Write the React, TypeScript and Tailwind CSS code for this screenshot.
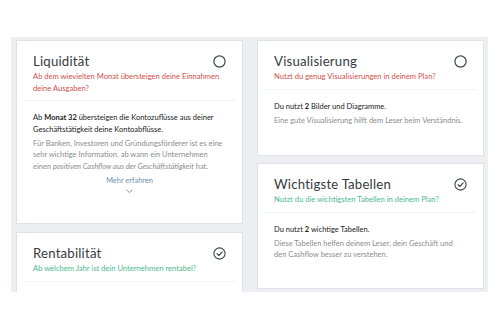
import React from 'react'

type CardProps = {
  title: string
  subtitle: string
  ok: boolean
  height: string
  children?: React.ReactNode
}

const CircleIcon = () => (
  <svg width="13" height="13" viewBox="0 0 13 13" fill="none">
    <circle cx="6.5" cy="6.5" r="5.6" stroke="#3f4449" strokeWidth="1.2" />
  </svg>
)

const CheckIcon = () => (
  <svg width="13" height="13" viewBox="0 0 13 13" fill="none">
    <circle cx="6.5" cy="6.5" r="5.6" stroke="#3f4449" strokeWidth="1.1" />
    <path d="M4 6.7l1.8 1.8L9.2 4.9" stroke="#3f4449" strokeWidth="1.1" strokeLinecap="round" strokeLinejoin="round" />
  </svg>
)

const Card = ({ title, subtitle, ok, height, children }: CardProps) => (
  <div className={`bg-white border border-[#dfe2e7] px-[16px] pt-[11px] shrink-0 ${height}`}>
    <div className="flex items-center justify-between">
      <h3 className="text-[13.2px] leading-[18px] tracking-[0.2px] text-[#353a40]">{title}</h3>
      {ok ? <CheckIcon /> : <CircleIcon />}
    </div>
    <p className={`mt-[1px] text-[7.6px] leading-[11.5px] ${ok ? 'text-[#4cb98c]' : 'text-[#cf514b]'}`}>
      {subtitle}
    </p>
    <div className="mx-[-10px] mt-[6px] h-px bg-[#f2f3f5]" />
    <div className="mr-[-10px] pt-[11px] text-[7.5px] leading-[11.5px]">{children}</div>
  </div>
)

export default function App() {
  return (
    <div className="w-[500px] h-[330px] bg-white pt-[37px] pl-[11px]" style={{ fontFamily: 'Lato, sans-serif' }}>
      <div className="w-[477px] h-[255px] overflow-hidden bg-[#eceef2] pt-[3px] pl-[5px] pr-[4px]">
        <div className="grid grid-cols-2 gap-[14px]">
          <div className="flex flex-col gap-[8px]">
            <Card
              title="Liquidität"
              subtitle="Ab dem wievielten Monat übersteigen deine Einnahmen deine Ausgaben?"
              ok={false}
              height="h-[184px]"
            >
              <p className="text-[#222]">
                Ab <b>Monat 32</b> übersteigen die Kontozuflüsse aus deiner Geschäftstätigkeit deine Kontoabflüsse.
              </p>
              <p className="mt-[2.5px] pr-[11px] text-[#8a8d91]">
                Für Banken, Investoren und Gründungsförderer ist es eine sehr wichtige Information, ab wann ein
                Unternehmen einen <i>positiven Cashflow aus der Geschäftstätigkeit</i> hat.
              </p>
              <div className="mr-[10px] mt-[3px] flex flex-col items-center text-[7.4px] text-[#6f8db0]">
                <span>Mehr erfahren</span>
                <svg width="7" height="5" viewBox="0 0 7 5" fill="none" className="mt-[2px]">
                  <path d="M.8 1l2.7 2.6L6.2 1" stroke="#6f8db0" strokeWidth="0.9" strokeLinecap="round" />
                </svg>
              </div>
            </Card>
            <Card
              title="Rentabilität"
              subtitle="Ab welchem Jahr ist dein Unternehmen rentabel?"
              ok={true}
              height="h-[120px]"
            />
          </div>
          <div className="flex flex-col gap-[7px]">
            <Card
              title="Visualisierung"
              subtitle="Nutzt du genug Visualisierungen in deinem Plan?"
              ok={false}
              height="h-[116px]"
            >
              <p className="text-[#222]">
                Du nutzt <b>2</b> Bilder und Diagramme.
              </p>
              <p className="mt-[2.5px] text-[#8a8d91]">Eine gute Visualisierung hilft dem Leser beim Verständnis.</p>
            </Card>
            <Card
              title="Wichtigste Tabellen"
              subtitle="Nutzt du die wichtigsten Tabellen in deinem Plan?"
              ok={true}
              height="h-[126px]"
            >
              <p className="text-[#222]">
                Du nutzt <b>2</b> wichtige Tabellen.
              </p>
              <p className="mt-[2.5px] pr-[20px] text-[#8a8d91]">
                Diese Tabellen helfen deinem Leser, dein Geschäft und den Cashflow besser zu verstehen.
              </p>
            </Card>
          </div>
        </div>
      </div>
    </div>
  )
}
